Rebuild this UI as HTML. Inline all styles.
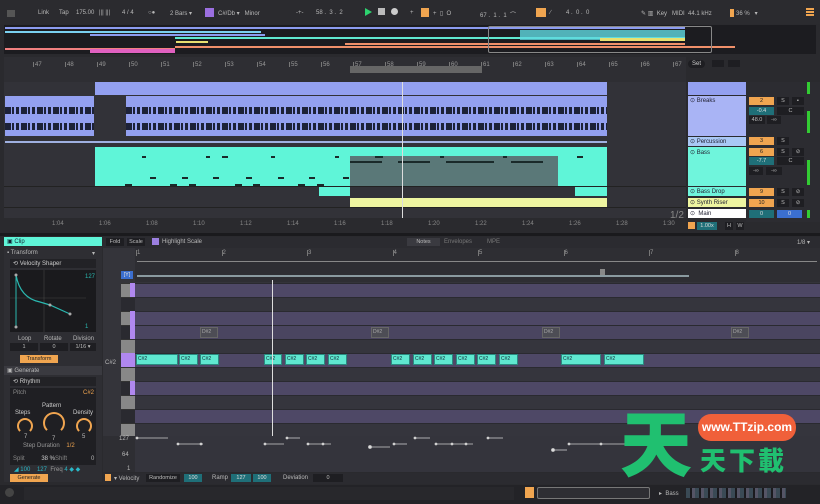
<!DOCTYPE html>
<html><head><meta charset="utf-8"><style>
*{margin:0;padding:0;box-sizing:border-box}
body{width:820px;height:504px;overflow:hidden;background:#2a2a2e;font-family:"Liberation Sans",sans-serif;font-size:6px;color:#bbb;position:relative}
.a{position:absolute}
.t{position:absolute;white-space:nowrap;font-size:6px;color:#b8b8b8}
.band{position:absolute;height:7px;background-image:repeating-linear-gradient(90deg,#1d2238 0 6px,#93a0f0 6px 7px,#1d2238 7px 9px,#93a0f0 9px 11px,#1d2238 11px 14px,#93a0f0 14px 16px);}
.bl{position:absolute;height:1.5px;background:#1d2238}
.note{position:absolute;height:11px;background:#5fe8d0;border:1px solid #2a8a80;color:#123;font-size:5px;padding-left:1px;line-height:9px}
.dn{position:absolute;height:11px;background:#4d4d55;border:1px solid #666;color:#aaa;font-size:5px;padding-left:1px;line-height:9px}
.btn{position:absolute;background:#1e1e22;height:8px;font-size:5.5px;line-height:8px;text-align:center;color:#bbb}
.or{background:#f0a550;color:#222}
.tl{background:#1f6f78;color:#ddd}
.dash{position:absolute;height:2px;background:#1a2a2a}
</style></head><body>
<div class="a" style="left:0;top:0;width:820px;height:24px;background:#2b2b2f"></div>
<div class="a" style="left:7px;top:10px;width:8px;height:7px;background:#555"></div>
<div class="t" style="left:38px;top:10px">Link</div>
<div class="t" style="left:59px;top:10px">Tap</div>
<div class="t" style="left:76px;top:10px">175.00</div>
<div class="t" style="left:99px;top:10px">||| |||</div>
<div class="t" style="left:122px;top:10px">4 / 4</div>
<div class="t" style="left:148px;top:10px">○●</div>
<div class="t" style="left:170px;top:10px">2 Bars ▾</div>
<div class="a" style="left:205px;top:8px;width:9px;height:9px;background:#9b6fe0"></div>
<div class="t" style="left:218px;top:10px">C#/Db ▾ &nbsp; Minor</div>
<div class="t" style="left:296px;top:10px">-+-</div>
<div class="t" style="left:316px;top:10px">58 . &nbsp;3 . &nbsp;2</div>
<div class="a" style="left:365px;top:8px;width:0;height:0;border-left:7px solid #2dd36f;border-top:4px solid transparent;border-bottom:4px solid transparent"></div>
<div class="a" style="left:378px;top:8px;width:7px;height:7px;background:#bbb"></div>
<div class="a" style="left:391px;top:8px;width:7px;height:7px;background:#ccc;border-radius:50%"></div>
<div class="t" style="left:410px;top:10px">+</div>
<div class="a" style="left:421px;top:8px;width:8px;height:9px;background:#f0a550"></div>
<div class="t" style="left:433px;top:10px">+ &nbsp;▯ &nbsp;O</div>
<div class="t" style="left:480px;top:10px">67 . &nbsp;1 . &nbsp;1 &nbsp;⌒</div>
<div class="a" style="left:536px;top:8px;width:10px;height:9px;background:#f0a550"></div>
<div class="t" style="left:550px;top:10px">∕ &nbsp; &nbsp; &nbsp; &nbsp; 4 . &nbsp;0 . &nbsp;0</div>
<div class="t" style="left:641px;top:10px">✎ ▥ &nbsp;Key &nbsp; MIDI &nbsp;44.1 kHz</div>
<div class="a" style="left:730px;top:9px;width:4px;height:8px;background:#f0a550"></div>
<div class="t" style="left:736px;top:10px">36 % &nbsp; ▾</div>
<div class="a" style="left:806px;top:8px;width:8px;height:1.5px;background:#f0a550;box-shadow:0 3px #f0a550,0 6px #f0a550"></div>
<div class="a" style="left:4px;top:25px;width:812px;height:29px;background:#1c1c20"></div>
<div class="a" style="left:5px;top:27px;width:680px;height:1.5px;background:#8c9cf0"></div>
<div class="a" style="left:5px;top:31px;width:256px;height:1.5px;background:#7ad0f0"></div>
<div class="a" style="left:90px;top:34px;width:175px;height:1.5px;background:#8c9cf0"></div>
<div class="a" style="left:175px;top:37px;width:510px;height:2px;background:#5fe8d0"></div>
<div class="a" style="left:176px;top:41px;width:32px;height:1.5px;background:#e8e070"></div>
<div class="a" style="left:5px;top:48px;width:170px;height:1.5px;background:#f08080"></div>
<div class="a" style="left:90px;top:49px;width:85px;height:4px;background:#e060c0"></div>
<div class="a" style="left:175px;top:46px;width:560px;height:1.5px;background:#f0906a"></div>
<div class="a" style="left:345px;top:43px;width:340px;height:2px;background:#f0906a"></div>
<div class="a" style="left:520px;top:30px;width:165px;height:10px;background:#5fd8e0;opacity:.8"></div>
<div class="a" style="left:600px;top:38px;width:85px;height:3px;background:#e8e070"></div>
<div class="a" style="left:488px;top:26px;width:224px;height:27px;border:1px solid #888;border-radius:2px"></div>
<div class="a" style="left:4px;top:57px;width:682px;height:25px;background:#2e2e33"></div>
<div id="bars"></div>
<div class="a" style="left:350px;top:66px;width:132px;height:7px;background:#666"></div>
<div class="a" style="left:688px;top:60px;width:17px;height:8px;background:#1e1e22;border-radius:4px;color:#ccc;font-size:6px;line-height:8px;text-align:center">Set</div>
<div class="a" style="left:712px;top:60px;width:12px;height:7px;background:#1e1e22"></div>
<div class="a" style="left:728px;top:60px;width:12px;height:7px;background:#1e1e22"></div>
<div class="a" style="left:4px;top:82px;width:682px;height:150px;background:#323238"></div>
<div class="a" style="left:95px;top:82px;width:512px;height:13px;background:#93a0f0"></div>
<div class="a" style="left:5px;top:96px;width:89px;height:40px;background:#93a0f0"></div>
<div class="a" style="left:126px;top:96px;width:481px;height:40px;background:#93a0f0"></div>
<div class="bl" style="left:5px;top:110px;width:89px"></div><div class="bl" style="left:126px;top:110px;width:481px"></div>
<div class="bl" style="left:5px;top:126px;width:89px"></div><div class="bl" style="left:126px;top:126px;width:481px"></div>
<div class="band" style="left:5px;top:107px;width:89px"></div><div class="band" style="left:126px;top:107px;width:481px"></div>
<div class="band" style="left:5px;top:123px;width:89px"></div><div class="band" style="left:126px;top:123px;width:481px"></div>
<div class="a" style="left:5px;top:141px;width:602px;height:2px;background:#9fb0e0"></div>
<div class="a" style="left:95px;top:147px;width:512px;height:39px;background:#5ff5d8"></div>
<div class="a" style="left:350px;top:156px;width:208px;height:30px;background:#5a7878"></div>
<div id="bd"></div>
<div class="a" style="left:319px;top:186px;width:31px;height:10px;background:#5ff5d8"></div>
<div class="a" style="left:575px;top:187px;width:32px;height:9px;background:#5ff5d8"></div>
<div class="a" style="left:350px;top:198px;width:257px;height:9px;background:#eef5a0"></div>
<div class="a" style="left:4px;top:186px;width:682px;height:1px;background:#222"></div>
<div class="a" style="left:4px;top:207px;width:682px;height:1px;background:#222"></div>
<div class="a" style="left:402px;top:82px;width:1px;height:150px;background:#ddd"></div>
<div class="t" style="left:670px;top:210px;font-size:10px;color:#888">1/2</div>
<div class="a" style="left:4px;top:218px;width:682px;height:14px;background:#2a2a2e"></div>
<div id="tb"></div>
<div class="a" style="left:688px;top:82px;width:58px;height:13px;background:#93a0f0"></div>
<div class="a" style="left:688px;top:96px;width:58px;height:40px;background:#a9b4f5"></div>
<div class="t" style="left:690px;top:97px;color:#223">⊙ Breaks</div>
<div class="a" style="left:688px;top:137px;width:58px;height:9px;background:#a9c8f5"></div>
<div class="t" style="left:690px;top:138px;color:#223">⊙ Percussion</div>
<div class="a" style="left:688px;top:147px;width:58px;height:39px;background:#6ff5dc"></div>
<div class="t" style="left:690px;top:149px;color:#223">⊙ Bass</div>
<div class="a" style="left:688px;top:187px;width:58px;height:9px;background:#6ff5dc"></div>
<div class="t" style="left:690px;top:188px;color:#223">⊙ Bass Drop</div>
<div class="a" style="left:688px;top:198px;width:58px;height:9px;background:#eef5a0"></div>
<div class="t" style="left:690px;top:199px;color:#223">⊙ Synth Riser</div>
<div class="a" style="left:688px;top:209px;width:58px;height:9px;background:#fff"></div>
<div class="t" style="left:690px;top:210px;color:#223">⊙ &nbsp;Main</div>
<div class="a" style="left:746px;top:82px;width:74px;height:140px;background:#2c2c31"></div>
<div class="btn or" style="left:749px;top:97px;width:25px">2</div><div class="btn" style="left:777px;top:97px;width:12px">S</div><div class="btn" style="left:792px;top:97px;width:12px">▪</div>
<div class="btn tl" style="left:749px;top:107px;width:25px">-0.4</div><div class="btn" style="left:777px;top:107px;width:27px">C</div>
<div class="btn" style="left:749px;top:116px;width:16px">48.0</div><div class="btn" style="left:767px;top:116px;width:14px">-∞</div>
<div class="btn or" style="left:749px;top:137px;width:25px">3</div><div class="btn" style="left:777px;top:137px;width:12px">S</div>
<div class="btn or" style="left:749px;top:148px;width:25px">6</div><div class="btn" style="left:777px;top:148px;width:12px">S</div><div class="btn" style="left:792px;top:148px;width:12px">⊘</div>
<div class="btn tl" style="left:749px;top:157px;width:25px">-7.7</div><div class="btn" style="left:777px;top:157px;width:27px">C</div>
<div class="btn" style="left:749px;top:167px;width:14px">-∞</div><div class="btn" style="left:766px;top:167px;width:16px">-∞</div>
<div class="btn or" style="left:749px;top:188px;width:25px">9</div><div class="btn" style="left:777px;top:188px;width:12px">S</div><div class="btn" style="left:792px;top:188px;width:12px">⊘</div>
<div class="btn or" style="left:749px;top:199px;width:25px">10</div><div class="btn" style="left:777px;top:199px;width:12px">S</div><div class="btn" style="left:792px;top:199px;width:12px">⊘</div>
<div class="btn tl" style="left:749px;top:210px;width:25px">0</div><div class="btn" style="left:777px;top:210px;width:25px;background:#3b6fd0;color:#ddd">0</div>
<div class="a" style="left:807px;top:82px;width:3px;height:12px;background:#3c3;"></div>
<div class="a" style="left:807px;top:111px;width:3px;height:22px;background:#3c3"></div>
<div class="a" style="left:807px;top:160px;width:3px;height:25px;background:#3c3"></div>
<div class="a" style="left:807px;top:210px;width:3px;height:8px;background:#3c3"></div>
<div class="a" style="left:688px;top:222px;width:7px;height:7px;background:#f0a550"></div>
<div class="btn tl" style="left:697px;top:222px;width:20px">1.00x</div>
<div class="btn" style="left:725px;top:222px;width:8px">H</div><div class="btn" style="left:736px;top:222px;width:8px">W</div>
<div class="a" style="left:0;top:233px;width:820px;height:3px;background:#1a1a1d"></div>
<div class="a" style="left:4px;top:237px;width:98px;height:9px;background:#5ff5d8"></div>
<div class="t" style="left:7px;top:238px;color:#123">▣ Clip</div>
<div class="a" style="left:4px;top:247px;width:98px;height:235px;background:#2e2e33"></div>
<div class="t" style="left:7px;top:250px">▪ Transform</div><div class="t" style="left:92px;top:250px">▾</div>
<div class="a" style="left:10px;top:259px;width:86px;height:9px;background:#222226"></div>
<div class="t" style="left:13px;top:260px;color:#ccc">⟲ Velocity Shaper</div>
<div class="a" style="left:10px;top:270px;width:86px;height:62px;background:#1a1a1d"></div>
<svg class="a" style="left:10px;top:270px" width="86" height="62"><line x1="34" y1="0" x2="34" y2="62" stroke="#444" stroke-width=".6"/><line x1="0" y1="28" x2="76" y2="28" stroke="#444" stroke-width=".6"/><path d="M6 5 Q10 28 30 32 L40 35 L60 44" stroke="#2ab8b0" fill="none" stroke-width="1.2"/><line x1="6" y1="5" x2="6" y2="57" stroke="#2ab8b0"/><circle cx="6" cy="5" r="1.5" fill="#aaa"/><circle cx="40" cy="35" r="1.5" fill="#aaa"/><circle cx="60" cy="44" r="1.5" fill="#aaa"/><circle cx="6" cy="57" r="1.5" fill="#aaa"/><text x="75" y="8" fill="#2ab8b0" font-size="6" font-family="Liberation Sans">127</text><text x="75" y="58" fill="#2ab8b0" font-size="6" font-family="Liberation Sans">1</text></svg>
<div class="t" style="left:18px;top:336px">Loop</div><div class="t" style="left:44px;top:336px">Rotate</div><div class="t" style="left:73px;top:336px">Division</div>
<div class="btn" style="left:10px;top:343px;width:28px">1</div><div class="btn" style="left:40px;top:343px;width:28px">0</div><div class="btn" style="left:70px;top:343px;width:26px">1/16 ▾</div>
<div class="btn or" style="left:20px;top:355px;width:38px">Transform</div>
<div class="a" style="left:4px;top:366px;width:98px;height:9px;background:#3a3a40"></div>
<div class="t" style="left:7px;top:367px">▣ Generate</div>
<div class="a" style="left:10px;top:377px;width:86px;height:9px;background:#222226"></div>
<div class="t" style="left:13px;top:378px;color:#ccc">⟲ Rhythm</div>
<div class="a" style="left:10px;top:388px;width:86px;height:77px;background:#1f1f23"></div>
<div class="t" style="left:13px;top:390px;color:#888">Pitch</div><div class="t" style="left:83px;top:390px;color:#f0a550">C#2</div>
<div class="t" style="left:42px;top:403px;color:#ccc">Pattern</div>
<div class="t" style="left:15px;top:410px;color:#ccc">Steps</div><div class="t" style="left:73px;top:410px;color:#ccc">Density</div>
<div class="a" style="left:17px;top:418px;width:16px;height:16px;border:2px solid #f0a550;border-radius:50%;border-bottom-color:transparent"></div>
<div class="a" style="left:43px;top:412px;width:22px;height:22px;border:2px solid #f0a550;border-radius:50%;border-bottom-color:transparent"></div>
<div class="a" style="left:76px;top:418px;width:16px;height:16px;border:2px solid #f0a550;border-radius:50%;border-bottom-color:transparent"></div>
<div class="t" style="left:24px;top:434px">7</div><div class="t" style="left:52px;top:436px">7</div><div class="t" style="left:82px;top:434px">5</div>
<div class="t" style="left:23px;top:443px;color:#999">Step Duration &nbsp; &nbsp;<span style="color:#f0a550">1/2</span></div>
<div class="t" style="left:13px;top:456px;color:#888">Split &nbsp; &nbsp; &nbsp; &nbsp; &nbsp;<span style="color:#ccc">38 %</span></div><div class="t" style="left:55px;top:456px;color:#888">Shift</div><div class="t" style="left:91px;top:456px">0</div>
<div class="t" style="left:14px;top:466px;color:#2ab8c8">◢ 100 &nbsp; &nbsp;127 &nbsp;<span style="color:#999">Freq</span> 4 ◆ ◆</div>
<div class="btn or" style="left:10px;top:474px;width:38px">Generate</div>
<div class="a" style="left:103px;top:237px;width:717px;height:11px;background:#2b2b30"></div>
<div class="btn" style="left:106px;top:238px;width:18px">Fold</div><div class="btn" style="left:127px;top:238px;width:18px">Scale</div>
<div class="a" style="left:152px;top:238px;width:7px;height:7px;background:#9b7fe0"></div>
<div class="t" style="left:162px;top:239px">Highlight Scale</div>
<div class="btn" style="left:407px;top:238px;width:33px;background:#3a3a40">Notes</div>
<div class="t" style="left:444px;top:239px;color:#777">Envelopes</div><div class="t" style="left:487px;top:239px;color:#777">MPE</div>
<div class="t" style="left:797px;top:239px">1/8 ▾</div>
<div class="a" style="left:103px;top:248px;width:717px;height:188px;background:#34343a"></div>
<div class="a" style="left:135px;top:248px;width:685px;height:34px;background:#2e2e33"></div>
<div id="er"></div>
<div class="a" style="left:137px;top:261px;width:680px;height:1px;background:#888"></div>
<div class="a" style="left:137px;top:275px;width:552px;height:2px;background:#8a9aa0"></div>
<div class="a" style="left:600px;top:269px;width:5px;height:6px;background:#888"></div>
<div class="btn" style="left:121px;top:271px;width:12px;background:#3b6fd0;color:#ddd">[Y]</div>
<div id="rows"></div>
<div class="t" style="left:105px;top:360px">C#2</div>
<div id="notes"></div>
<div class="a" style="left:272px;top:280px;width:1px;height:192px;background:#ddd"></div>
<div class="a" style="left:103px;top:436px;width:717px;height:36px;background:#2e2e33"></div>
<div class="a" style="left:135px;top:436px;width:685px;height:36px;background:#34343c"></div>
<div class="t" style="left:119px;top:436px">127</div><div class="t" style="left:122px;top:452px">64</div><div class="t" style="left:127px;top:466px">1</div>
<svg class="a" style="left:135px;top:436px" width="550" height="36"><g stroke="#ccc" stroke-width=".8" fill="#ddd">
<line x1="2" y1="2" x2="33" y2="2"/><circle cx="2" cy="2" r="1"/>
<line x1="43" y1="8" x2="68" y2="8"/><circle cx="43" cy="8" r="1"/><circle cx="66" cy="8" r="1"/>
<line x1="130" y1="8" x2="149" y2="8"/><circle cx="130" cy="8" r="1"/>
<line x1="152" y1="2" x2="165" y2="2"/><circle cx="152" cy="2" r="1"/>
<line x1="173" y1="8" x2="196" y2="8"/><circle cx="173" cy="8" r="1"/><circle cx="188" cy="8" r="1"/>
<line x1="235" y1="11" x2="255" y2="11"/><circle cx="235" cy="11" r="1.5"/>
<line x1="259" y1="8" x2="272" y2="8"/><circle cx="259" cy="8" r="1"/>
<line x1="280" y1="2" x2="295" y2="2"/><circle cx="280" cy="2" r="1"/>
<line x1="301" y1="8" x2="338" y2="8"/><circle cx="301" cy="8" r="1"/><circle cx="317" cy="8" r="1"/><circle cx="331" cy="8" r="1"/>
<line x1="353" y1="2" x2="368" y2="2"/><circle cx="353" cy="2" r="1"/>
<line x1="418" y1="14" x2="432" y2="14"/><circle cx="418" cy="14" r="1.5"/>
<line x1="434" y1="8" x2="500" y2="8"/><circle cx="434" cy="8" r="1"/><circle cx="466" cy="8" r="1"/></g></svg>
<div class="a" style="left:103px;top:473px;width:717px;height:11px;background:#2b2b30"></div>
<div class="a" style="left:105px;top:474px;width:6px;height:7px;background:#f0a550"></div>
<div class="t" style="left:114px;top:475px">▾ Velocity</div>
<div class="btn" style="left:146px;top:474px;width:34px">Randomize</div><div class="btn tl" style="left:184px;top:474px;width:18px">100</div>
<div class="t" style="left:212px;top:475px">Ramp</div><div class="btn tl" style="left:231px;top:474px;width:20px">127</div><div class="btn tl" style="left:253px;top:474px;width:18px">100</div>
<div class="t" style="left:283px;top:475px">Deviation</div><div class="btn" style="left:313px;top:474px;width:30px">0</div>
<div class="a" style="left:0;top:485px;width:820px;height:19px;background:#232327"></div>
<div class="a" style="left:5px;top:488px;width:9px;height:9px;border-radius:50%;background:#444"></div>
<div class="a" style="left:24px;top:487px;width:490px;height:13px;background:#28282c"></div>
<div class="a" style="left:525px;top:487px;width:9px;height:11px;background:#f0a550"></div>
<div class="a" style="left:537px;top:487px;width:113px;height:12px;border:1px solid #777;border-radius:2px;background:#2e2e33"></div>
<div class="t" style="left:659px;top:490px">▸ &nbsp;Bass</div>
<div class="a" style="left:686px;top:488px;width:100px;height:10px;background:repeating-linear-gradient(90deg,#3a4a55 0 4px,#1a1a1e 4px 6px,#556 6px 9px)"></div>
<div class="a" style="left:620px;top:400px;font-family:'Noto Sans CJK SC',sans-serif;font-weight:900;font-size:72px;line-height:80px;color:#20c070">天</div>
<div class="a" style="left:698px;top:414px;width:98px;height:27px;border-radius:13px;background:#f0603a;color:#fff;font-weight:bold;font-size:12px;line-height:27px;text-align:center">www.TTzip.com</div>
<div class="a" style="left:700px;top:444px;font-family:'Noto Sans CJK SC',sans-serif;font-weight:900;font-size:26px;line-height:32px;color:#20c070;letter-spacing:3px">天下載</div>
<script>
var h='';
for(var i=0;i<21;i++){var x=35+i*32;h+='<div class="t" style="left:'+x+'px;top:62px;color:#999">'+(47+i)+'</div><div class="a" style="left:'+(x-2)+'px;top:62px;width:1px;height:5px;background:#777"></div>';}
document.getElementById('bars').outerHTML=h;
h='';var lb=['1:04','1:06','1:08','1:10','1:12','1:14','1:16','1:18','1:20','1:22','1:24','1:26','1:28','1:30'];
for(i=0;i<lb.length;i++){h+='<div class="t" style="left:'+(52+i*47)+'px;top:221px;color:#888">'+lb[i]+'</div>';}
document.getElementById('tb').outerHTML=h;
h='';var bd=[[142,156,4],[206,156,4],[222,156,6],[271,156,4],[335,156,4],[375,156,8],[440,156,4],[503,156,4],[577,156,6],[350,161,32],[398,161,32],[446,161,48],[511,161,32],[150,177,6],[182,177,6],[213,177,6],[246,177,6],[278,177,6],[309,177,6],[343,177,6],[125,184,7],[170,184,7],[189,184,7],[235,184,7],[253,184,7],[298,184,7],[317,184,7]];
for(i=0;i<bd.length;i++)h+='<div class="dash" style="left:'+bd[i][0]+'px;top:'+bd[i][1]+'px;width:'+bd[i][2]+'px"></div>';
document.getElementById('bd').outerHTML=h;
h='';for(i=1;i<=8;i++){var x=137+(i-1)*85.5;h+='<div class="t" style="left:'+x+'px;top:250px;color:#999">'+i+'</div><div class="a" style="left:'+(x-1)+'px;top:250px;width:1px;height:6px;background:#777"></div>';}
document.getElementById('er').outerHTML=h;
h='';var pat=[1,0,1,2,0,1,0,1,0,1,0,1];var y=283;
for(i=0;i<11;i++){var c=pat[i]==0?'#35353d':(pat[i]==2?'#4a4560':'#4e4866');h+='<div class="a" style="left:135px;top:'+y+'px;width:685px;height:14px;background:'+c+';border-top:1px solid #2a2a30"></div>';
h+='<div class="a" style="left:121px;top:'+y+'px;width:14px;height:14px;background:'+(i%2?'#2a2a30':'#888')+';border-top:1px solid #333"></div>';
if(pat[i]&&i<9)h+='<div class="a" style="left:130px;top:'+y+'px;width:5px;height:14px;background:#b088f0"></div>';y+=14;}
h+='<div class="a" style="left:121px;top:353px;width:14px;height:14px;background:#b088f0"></div>';
document.getElementById('rows').outerHTML=h;
h='';var n=[[136,42],[179,19],[200,19],[264,18],[285,19],[306,19],[328,19],[391,19],[413,19],[434,19],[456,19],[477,19],[499,19],[561,40],[604,40]];
for(i=0;i<n.length;i++)h+='<div class="note" style="left:'+n[i][0]+'px;top:354px;width:'+n[i][1]+'px">C#2</div>';
var d=[200,371,542,731];for(i=0;i<d.length;i++)h+='<div class="dn" style="left:'+d[i]+'px;top:327px;width:18px">D#2</div>';
document.getElementById('notes').outerHTML=h;
</script>
</body></html>
